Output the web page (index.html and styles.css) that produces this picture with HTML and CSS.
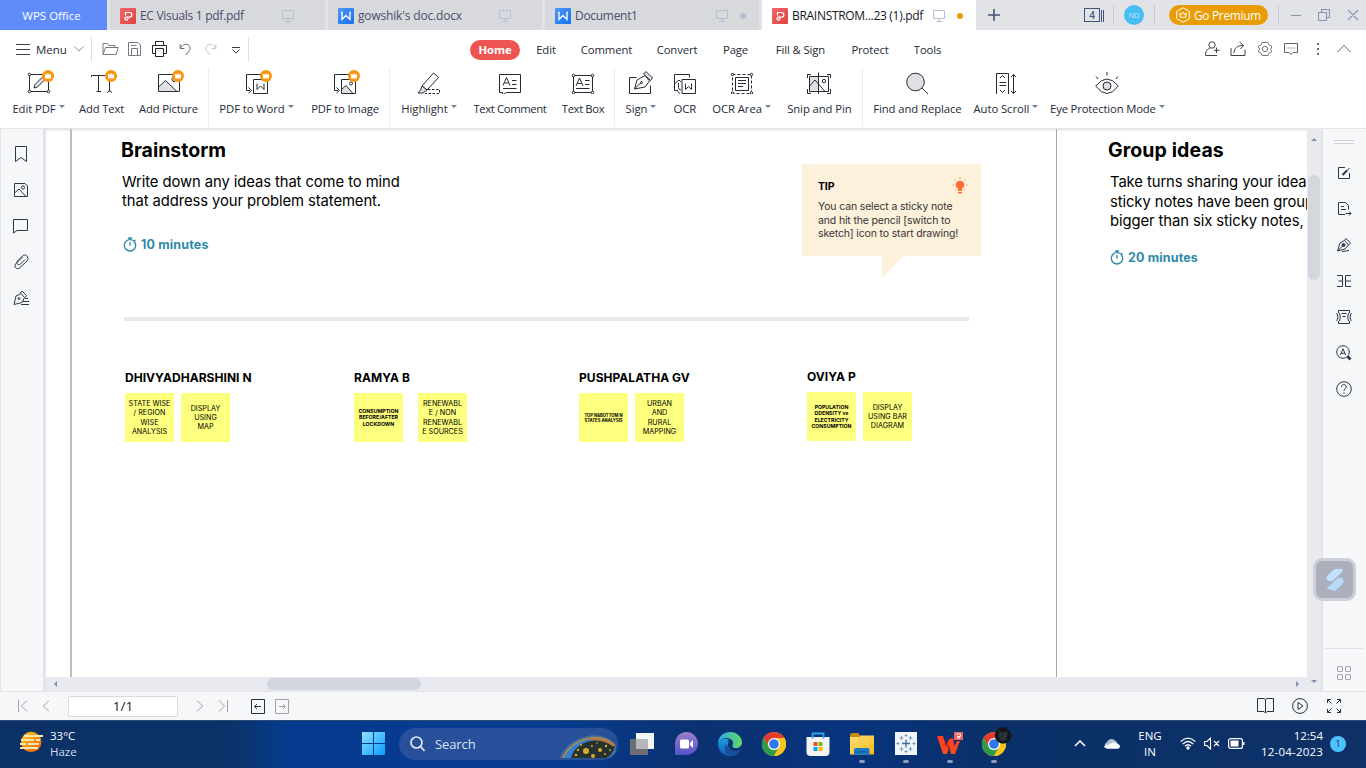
FILE: index.html
```html
<!DOCTYPE html>
<html lang="en">
<head>
<meta charset="utf-8">
<title>WPS Office</title>
<link rel="stylesheet" href="styles.css">
</head>
<body>
<svg class="defs" width="0" height="0">
  <defs>
    <linearGradient id="gRed" x1="0" y1="0" x2="1" y2="1"><stop offset="0" stop-color="#f0666a"/><stop offset="1" stop-color="#df4340"/></linearGradient>
    <linearGradient id="gBlue" x1="0" y1="0" x2="1" y2="1"><stop offset="0" stop-color="#5297f8"/><stop offset="1" stop-color="#1470ee"/></linearGradient>
    <linearGradient id="gWin" x1="0" y1="0" x2="1" y2="1"><stop offset="0" stop-color="#8be3ff"/><stop offset="1" stop-color="#0a9cff"/></linearGradient>
    <linearGradient id="gSun" x1="0" y1="0" x2="1" y2="1"><stop offset="0" stop-color="#ffd21c"/><stop offset="1" stop-color="#e25a0c"/></linearGradient>
    <linearGradient id="gFolder" x1="0" y1="0" x2="1" y2="1"><stop offset="0" stop-color="#ffe07a"/><stop offset="1" stop-color="#f5b916"/></linearGradient>
    <linearGradient id="gChat" x1="0" y1="0" x2="0" y2="1"><stop offset="0" stop-color="#9a7fc4"/><stop offset="1" stop-color="#5353c8"/></linearGradient>
    <linearGradient id="gEdge" x1="0" y1="0" x2="1" y2="0"><stop offset="0" stop-color="#2aa9e6"/><stop offset="1" stop-color="#62dc64"/></linearGradient>
    <linearGradient id="gEdge2" x1="0" y1="0" x2="0" y2="1"><stop offset="0" stop-color="#1b9be0"/><stop offset="1" stop-color="#1458b4"/></linearGradient>
    <linearGradient id="gWps" x1="0" y1="0" x2="0" y2="1"><stop offset="0" stop-color="#ff3a2a"/><stop offset="1" stop-color="#f4501c"/></linearGradient>
    <symbol id="pdf" viewBox="0 0 16 16"><rect width="16" height="16" rx="1" fill="url(#gRed)"/><path d="M5.500 7.500V4.500H9.500A2.300 2.300 0 0 1 9.500 9.200H6.500A1.500 1.500 0 1 0 7.900 10.900V9.500" fill="none" stroke="#fff" stroke-width="1.200"/></symbol>
    <symbol id="doc" viewBox="0 0 16 16"><rect width="16" height="16" rx="1" fill="url(#gBlue)"/><path d="M3 4.500H4V11.500L8 7.500L12 11.500V4.500H13" fill="none" stroke="#fff" stroke-width="1.300"/></symbol>
    <symbol id="monitor" viewBox="0 0 12 12"><path d="M.5.5H11.500V8.500H.5ZM6 8.500V11M3 11.500H9" fill="none" stroke="#b5bfd6"/></symbol>
    <symbol id="crown" viewBox="0 0 12 12"><circle cx="6" cy="6" r="6" fill="#f9960f"/><path d="M3 3.500L4.600 5L6 3L7.400 5L9 3.500V8.500H3Z" fill="#fff"/></symbol>
    <symbol id="watch" viewBox="0 0 14 15"><circle cx="7" cy="8.300" r="5.700" fill="none" stroke="#2e8aa8" stroke-width="1.300"/><path d="M5 1H9M7 1V2.500M7 5V8.700M11.500 3L12.500 4" stroke="#2e8aa8" stroke-width="1.300"/></symbol>
    <symbol id="chrome" viewBox="0 0 24 24"><circle cx="12" cy="12" r="12" fill="#fcc934"/><path d="M1.600 6A12 12 0 0 1 22.400 6H12L6.800 15Z" fill="#e33b2e"/><path d="M1.600 6A12 12 0 0 0 12 24L17.200 15A6 6 0 0 1 6.800 15Z" fill="#2a9c4a"/><path d="M22.400 6A12 12 0 0 1 12 24L17.200 15A6 6 0 0 0 12 6Z" fill="#fcc31e"/><circle cx="12" cy="12" r="6" fill="#fff"/><circle cx="12" cy="12" r="4.800" fill="#2f78ea"/></symbol>
  </defs>
</svg>

<div class="window">
  <header class="tabs">
    <div class="home-tab">WPS Office</div>
    <div class="tab"><svg width="16" height="16"><use href="#pdf"/></svg><span class="t1">EC Visuals 1 pdf.pdf</span><svg class="mon" width="12" height="12"><use href="#monitor"/></svg></div>
    <div class="tab"><svg width="16" height="16"><use href="#doc"/></svg><span class="t2">gowshik's doc.docx</span><svg class="mon" width="12" height="12"><use href="#monitor"/></svg></div>
    <div class="tab dotted"><svg width="16" height="16"><use href="#doc"/></svg><span class="t3">Document1</span><svg class="mon" width="12" height="12"><use href="#monitor"/></svg><i class="dot"></i></div>
    <div class="tab dotted active"><svg width="16" height="16"><use href="#pdf"/></svg><span class="t4">BRAINSTROM...23 (1).pdf</span><svg class="mon" width="12" height="12"><use href="#monitor"/></svg><i class="dot"></i></div>
    <svg class="plus" width="12" height="12" viewBox="0 0 12 12"><path d="M6 0V12M0 6H12" stroke="#41547a" stroke-width="1.600"/></svg>
    <div class="win">
      <div class="count"><b>4</b><i></i><i></i></div>
      <i class="vs"></i>
      <div class="avatar">ND</div>
      <i class="vs"></i>
      <div class="premium"><svg width="14" height="16" viewBox="0 0 14 16" fill="none" stroke="#fff"><path d="M7 .7L13.300 4.300V11.700L7 15.300L.7 11.700V4.300Z"/><path d="M3.700 6.200L5.500 7.400L7 5.200L8.500 7.400L10.300 6.200L9.600 10.300H4.400Z"/></svg><span>Go Premium</span></div>
      <i class="vs"></i>
      <svg class="ctl" width="70" height="12" viewBox="0 0 70 12" fill="none" stroke="#8695b3" stroke-width="1.100"><path d="M0 6.500H10M27.500 3.500H35.500V11.500H27.500ZM30.500 3.500V.5H38.500V8.500H35.500M57 1L67 11M67 1L57 11"/></svg>
    </div>
  </header>

  <nav class="menubar">
    <svg class="burger" width="14" height="11" viewBox="0 0 14 11"><path d="M0 .5H14M0 5.500H14M0 10.500H14" stroke="#3c3f4b"/></svg>
    <span class="menu-word">Menu</span>
    <svg class="chev" width="10" height="6" viewBox="0 0 10 6"><path d="M.5.5L5 5L9.500.5" fill="none" stroke="#898f9a"/></svg>
    <i class="ms"></i>
    <svg class="q-open" width="17" height="14" viewBox="0 0 17 14" fill="none" stroke="#747985"><path d="M1 12.500V1.500H5.500L7 3.500H13V5.500M1 12.500L3.500 5.500H16.300L14 12.500Z"/></svg>
    <svg class="q-save" width="13" height="14" viewBox="0 0 13 14" fill="none" stroke="#747985"><path d="M.5.5H10L12.500 3V13.500H.5ZM3.500 13.500V6.500H9.500V13.500M3 3.500H8.500"/></svg>
    <svg class="q-print" width="15" height="16" viewBox="0 0 15 16" fill="none" stroke="#22242c"><path d="M3.500 4.500V.5H11.500V4.500M3.500 12.500H.5V4.500H14.500V12.500H11.500M3.500 7.500H11.500V15.500H3.500Z"/></svg>
    <svg class="q-undo" width="12" height="12" viewBox="0 0 12 12" fill="none" stroke="#666b77"><path d="M1.200 1V5.500H5.500M1.200 5.500C3.500 1 8 .3 10 2.500C12.500 5.500 10.500 9.500 6.500 11.500"/></svg>
    <svg class="q-redo" width="12" height="12" viewBox="0 0 12 12" fill="none" stroke="#c5c7cc"><path d="M10.800 1V5.500H6.500M10.800 5.500C8.500 1 4 .3 2 2.500C-.5 5.500 1.500 9.500 5.500 11.500"/></svg>
    <svg class="q-more" width="8" height="7" viewBox="0 0 8 7" fill="none" stroke="#3c3f4b"><path d="M0 .5H8M.5 2.500L4 6L7.500 2.500"/></svg>
    <i class="ms ms2"></i>
    <div class="pages">
      <span class="pill">Home</span><span class="p20">Edit</span><span class="p49">Comment</span><span class="p40">Convert</span><span class="p25">Page</span><span class="p53">Fill &amp; Sign</span><span class="p36">Protect</span><span class="p27">Tools</span>
    </div>
    <div class="acts">
      <svg width="16" height="16" viewBox="0 0 16 16" fill="none" stroke="#3f434e"><circle cx="8" cy="4" r="3.200"/><path d="M6 7C2.500 8.500 1.500 11 1.500 14.500H13M12.500 6.500V12M10 9.300H15.500" /></svg>
      <svg width="16" height="16" viewBox="0 0 16 16" fill="none" stroke="#3f434e"><path d="M1 7V14.500H15V8.500M4 12C4 7 7.500 4.500 13 4.500M9.500 1L13.500 4.500L10.500 8"/></svg>
      <svg width="16" height="16" viewBox="0 0 16 16" fill="none" stroke="#747985"><path d="M5 1.500H11L12 4L14.500 5V7L13.500 8L14.500 10V11L12 12L11 14.500H5L4 12L1.500 11V10L2.500 8L1.500 6V5L4 4Z"/><circle cx="8" cy="8" r="2.700"/></svg>
      <svg width="16" height="16" viewBox="0 0 16 16" fill="none" stroke="#5b606c"><path d="M1.500 2.500H14.500V11.500H10L8 13.500L6 11.500H1.500Z"/><path d="M4.500 7H11.500" stroke-dasharray="1.300 1.500"/></svg>
      <svg width="16" height="16" viewBox="0 0 16 16" fill="#666b77"><path d="M7 2h2v2H7zM7 7h2v2H7zM7 12h2v2H7z"/></svg>
      <svg width="16" height="16" viewBox="0 0 16 16" fill="none" stroke="#5b606c"><path d="M1.500 11L8 4.500L14.500 11"/></svg>
    </div>
  </nav>

  <div class="ribbon">
    <div class="group g-a">
      <div class="tool w51"><div class="ic"><svg width="24" height="24" viewBox="0 0 24 24" fill="none" stroke="#262a35"><path d="M2.500 4.500H21.500V21.500H2.500Z"/><path d="M7 18L8 14.500L16 6.500L18.500 9L10.500 17Z" fill="#dfe0e3"/><g fill="#fff"><circle cx="2.500" cy="4.500" r="1.300"/><circle cx="2.500" cy="21.500" r="1.300"/><circle cx="21.500" cy="21.500" r="1.300"/></g></svg><svg class="badge" width="12" height="12"><use href="#crown"/></svg></div><div class="lb dd">Edit PDF</div></div>
      <div class="tool w44"><div class="ic"><svg width="24" height="24" viewBox="0 0 24 24" fill="none" stroke="#262a35"><path d="M1.500 7V5.500H15M8.500 5.500V21.500M6.500 21.500H11M19.500 8V21.500M17 22.500Q19.500 21.500 19.500 20Q19.500 21.500 22 22.500"/></svg><svg class="badge" width="12" height="12"><use href="#crown"/></svg></div><div class="lb n1">Add Text</div></div>
      <div class="tool w59"><div class="ic"><svg width="24" height="24" viewBox="0 0 24 24" fill="none" stroke="#262a35"><path d="M1.500 17L8.500 10.500L20 21.500H1.500Z" fill="#dfe0e3" stroke="none"/><path d="M1.500 4.500H22.500V21.500H1.500ZM1.500 17L8.500 10.500L20 21.500"/><circle cx="17" cy="9.500" r="2"/></svg><svg class="badge" width="12" height="12"><use href="#crown"/></svg></div><div class="lb n1">Add Picture</div></div>
    </div>
    <div class="group g-b">
      <div class="tool w75"><div class="ic"><svg width="24" height="24" viewBox="0 0 24 24" fill="none" stroke="#262a35"><path d="M16 4.500H1.500V20.500H5M3.500 17.500L6.500 20.500L3.500 23M8.500 9.500H22.500V23.500H8.500ZM12 13.500V19.500L15.500 16L19 19.500V13.500"/></svg><svg class="badge" width="12" height="12"><use href="#crown"/></svg></div><div class="lb dd">PDF to Word</div></div>
      <div class="tool w68"><div class="ic"><svg width="24" height="24" viewBox="0 0 24 24" fill="none" stroke="#262a35"><path d="M16 4.500H1.500V20.500H5M3.500 17.500L6.500 20.500L3.500 23"/><path d="M8.500 19.500L13 15.500L20 23.500H8.500Z" fill="#dfe0e3" stroke="none"/><path d="M8.500 9.500H22.500V23.500H8.500ZM8.500 19.500L13 15.500L20 23.500"/><circle cx="18" cy="13.500" r="1.500"/></svg><svg class="badge" width="12" height="12"><use href="#crown"/></svg></div><div class="lb n1">PDF to Image</div></div>
    </div>
    <div class="group">
      <div class="tool w58"><div class="ic"><svg width="24" height="24" viewBox="0 0 24 24" fill="none" stroke="#262a35"><path d="M5 16L16.500 3L21.500 7.500L10 20Z"/><path d="M5 16L3.500 20L1 23H6L10 20Z" fill="#dfe0e3"/><path d="M11 19.500H22.500V23.500H8" stroke-dasharray="2.500 1.500"/></svg></div><div class="lb dd">Highlight</div></div>
      <div class="tool w72"><div class="ic"><svg width="24" height="24" viewBox="0 0 24 24" fill="none" stroke="#262a35"><path d="M1.500 4.500H22.500V22.500H8.500L4.500 25V22.500H1.500ZM5 15.500L8.500 7.500L12 15.500M6.500 13H10.500M14 10.500H18.500M14 14.500H18.500M5 18.500H18.500"/></svg></div><div class="lb n3">Text Comment</div></div>
      <div class="tool w42"><div class="ic"><svg width="24" height="24" viewBox="0 0 24 24" fill="none" stroke="#262a35"><path d="M2.500 5.500H21.500V22.500H2.500ZM5 16L8.500 8L12 16M6.500 13.500H10.500M14 10.500H18.500M14 14.500H18.500M5 18.500H18.500"/><g fill="#fff"><circle cx="2.500" cy="5.500" r="1.300"/><circle cx="21.500" cy="5.500" r="1.300"/><circle cx="2.500" cy="22.500" r="1.300"/><circle cx="21.500" cy="22.500" r="1.300"/></g></svg></div><div class="lb n3">Text Box</div></div>
    </div>
    <div class="group g-d">
      <div class="tool w32"><div class="ic"><svg width="24" height="24" viewBox="0 0 24 24" fill="none" stroke="#262a35"><path d="M7.500 7.500H.5V23.500H21.500V15.500M5.500 19L8 10L16 5.500L20.500 11L16 17L5.500 19ZM5.500 19L12 12.500"/><path d="M14.500 4L17 1.500L23.500 8L21.500 10.500Z" fill="#dfe0e3"/><circle cx="12.500" cy="12.500" r="1"/></svg></div><div class="lb dd">Sign</div></div>
      <div class="tool w23"><div class="ic"><svg width="24" height="24" viewBox="0 0 24 24" fill="none" stroke="#262a35"><path d="M5 20.500H1.500V4.500H16.500V7.500M1.500 14L6 10L8 12M5.500 13V17.500Q5.500 20 8 20M4.500 21.500L7 23.500M9 9.500H22.500V23.500H9ZM12.500 13.500V19.500L15.500 16.500L18.500 19.500V13.500"/></svg></div><div class="lb">OCR</div></div>
      <div class="tool w58"><div class="ic"><svg width="24" height="24" viewBox="0 0 24 24" fill="none" stroke="#262a35"><path d="M2.500 4.500H21.500V23.500H2.500Z" stroke-dasharray="3 2"/><path d="M5.500 7.500H18.500V20.500H5.500ZM8 10.500H16M8 13.500H16M8 16.500H13"/><g fill="#fff"><circle cx="2.500" cy="4.500" r="1.200"/><circle cx="21.500" cy="4.500" r="1.200"/><circle cx="2.500" cy="23" r="1.200"/><circle cx="21.500" cy="23" r="1.200"/></g></svg></div><div class="lb dd">OCR Area</div></div>
      <div class="tool w65"><div class="ic"><svg width="24" height="24" viewBox="0 0 24 24" fill="none" stroke="#262a35"><path d="M2.500 6.500H11.500V20.500H2.500Z" fill="#dfe0e3" stroke="none"/><path d="M.5 8V4.500H4M20 4.500H23.500V8M.5 19V23.500H4M20 23.500H23.500V19M2.500 6.500H21.500V21.500H2.500ZM11.500 2.500V25M2.500 16L8 10L18 21.500"/><circle cx="17" cy="11" r="1.700"/></svg></div><div class="lb">Snip and Pin</div></div>
    </div>
    <div class="group last">
      <div class="tool w89"><div class="ic"><svg width="24" height="24" viewBox="0 0 24 24" fill="none" stroke="#262a35"><circle cx="10.500" cy="12" r="8.800" fill="#dfe0e3"/><path d="M17 18L23 24"/></svg></div><div class="lb">Find and Replace</div></div>
      <div class="tool w65"><div class="ic"><svg width="24" height="24" viewBox="0 0 24 24" fill="none" stroke="#262a35"><path d="M2.500 3.500H14.500V24.500H2.500ZM6 8L8.500 5.500L11 8M6 20L8.500 22.500L11 20M5.500 12.500H12M5.500 15.500H12M19.500 4.500V23.500M17 7L19.500 4.500L22 7M17 21L19.500 23.500L22 21"/></svg></div><div class="lb dd">Auto Scroll</div></div>
      <div class="tool w115"><div class="ic"><svg width="24" height="24" viewBox="0 0 24 24" fill="none" stroke="#262a35"><path d="M.7 16Q12 2 23.300 16Q12 31 .7 16Z"/><circle cx="12" cy="16" r="4" fill="#dfe0e3"/><path d="M12 2V5.500M1 6.500L3 9M23 6.500L21 9"/></svg></div><div class="lb dd n1">Eye Protection Mode</div></div>
    </div>
  </div>

  <main class="work">
    <aside class="left">
      <svg viewBox="0 0 16 16"><path d="M2.500.5H13.500V15.500L8 11.500L2.500 15.500Z"/></svg>
      <svg viewBox="0 0 16 16"><path d="M1.500 1.500H12L14.500 4V14.500H1.500ZM1.500 11L6 7L13 14.500"/><circle cx="10" cy="5.500" r="1.600"/></svg>
      <svg viewBox="0 0 16 16"><path d="M.5 1.500H14.500V12.500H4L.5 15Z"/></svg>
      <svg viewBox="0 0 16 16"><path d="M9.500 3L3 9.500C0 13 4 16.500 7 13.500L14 7C17 3.500 12.500-1 9.500 2L4.500 7C2.500 9.500 5.500 12 7.500 10L12 5.500"/></svg>
      <svg viewBox="0 0 16 16"><path d="M1 14.500L3 6L8 3.500L11.500 7.500L9 12.500L1 14.500ZM7.500 3L9 1L13.500 5.500L12 7.500M10 11.500H16M8 14.500H16M12 8.500H15"/><circle cx="6" cy="8.500" r="1"/></svg>
    </aside>

    <div class="viewer">
      <section class="doc">
        <div class="sheet one">
          <div class="top">
            <div class="intro">
              <h1 class="h-a">Brainstorm</h1>
              <p class="lead l-a">Write down any ideas that come to mind<br><span class="l-a2">that address your problem statement.</span></p>
              <div class="time"><svg width="14" height="15"><use href="#watch"/></svg><b>10 minutes</b></div>
            </div>
            <div class="tip">
              <div class="tip-head"><b>TIP</b>
                <svg width="16" height="18" viewBox="0 0 16 18"><circle cx="8" cy="8" r="4.300" fill="#ff6d35"/><path d="M6 11H10V14H6ZM6 15H10V16.500H6Z" fill="#ff6d35"/><path d="M8 .5V2M.5 8H2M14 8H15.500M2.700 2.700L3.700 3.700M13.300 2.700L12.300 3.700M2.700 13.300L3.700 12.300M13.300 13.300L12.300 12.300" stroke="#ff8a5c"/></svg>
              </div>
              <p><span class="tp1">You can select a sticky note</span><br><span class="tp2">and hit the pencil [switch to</span><br><span class="tp3">sketch] icon to start drawing!</span></p>
              <svg class="tail" width="23" height="23"><path d="M0 0H23L0 22.500Z" fill="#fdf1dc"/></svg>
            </div>
          </div>
          <div class="rule"></div>
          <div class="people">
            <div class="person c1"><h2>DHIVYADHARSHINI N</h2><div class="notes"><div class="note">STATE WISE<br>/ REGION<br>WISE<br>ANALYSIS</div><div class="note">DISPLAY<br>USING<br>MAP</div></div></div>
            <div class="person c2"><h2>RAMYA B</h2><div class="notes wide"><div class="note small">CONSUMPTION<br>BEFORE/AFTER<br>LOCKDOWN</div><div class="note">RENEWABL<br>E / NON<br>RENEWABL<br>E SOURCES</div></div></div>
            <div class="person c3"><h2>PUSHPALATHA GV</h2><div class="notes"><div class="note tiny">TOP N&amp;BOTTOM N<br>STATES ANALYSIS</div><div class="note">URBAN<br>AND<br>RURAL<br>MAPPING</div></div></div>
            <div class="person c4"><h2>OVIYA P</h2><div class="notes"><div class="note small">POPULATION<br>DDENSITY vs<br>ELECTRICITY<br>CONSUMPTION</div><div class="note">DISPLAY<br>USING BAR<br>DIAGRAM</div></div></div>
          </div>
        </div>
        <div class="sheet two">
          <h1 class="h-b">Group ideas</h1>
          <p class="lead l-b"><span class="lb1">Take turns sharing your ideas</span><br><span class="lb2">sticky notes have been group</span><br><span class="lb3">bigger than six sticky notes, t</span></p>
          <div class="time"><svg width="14" height="15"><use href="#watch"/></svg><b>20 minutes</b></div>
        </div>
      </section>
      <div class="vbar"><i class="up"></i><i class="thumb"></i><i class="down"></i></div>
      <div class="hbar"><i class="lft"></i><i class="thumb"></i><i class="rgt"></i></div>
    </div>

    <aside class="right">
      <i class="grip"></i>
      <svg viewBox="0 0 16 16"><path d="M9 2.500H2.500V13.500H13.500V8M7 9.500L13.500 3" /><path d="M6.500 10L11 5.500" stroke-width="2"/></svg>
      <svg viewBox="0 0 16 16"><path d="M9 13.500H2.500V1.500H9.500L12.500 4.500V8.500M5 5.500H8M5 8.500H10M9.500 12.500H15M13 10.500L15 12.500L13 14.500"/></svg>
      <svg viewBox="0 0 16 16"><path d="M1.500 14L4 6L8.500 3.500L12.500 8L9 12L1.500 14L7 8.500M8.500 3.500L10 1.500L14.500 6L12.500 8M6 14.500L13 13.500"/><circle cx="7.500" cy="8" r="1.500" fill="#33415e"/></svg>
      <svg viewBox="0 0 16 16"><path d="M1 2.500H6.500V13.500H1M2.500 8H6.500M15 2.500H9.500V13.500H15M9.500 8H15"/></svg>
      <svg viewBox="0 0 16 16"><path d="M2.500 4V1.500H13.500V4M2.500 12V14.500H13.500V12M.8 4Q3.200 8 .8 12M3.500 4Q5 8 3.500 12M12.500 4Q11 8 12.500 12M15.200 4Q12.800 8 15.200 12M5.500 4.500H10.500M6.500 7.500H9.500"/></svg>
      <svg viewBox="0 0 16 16"><circle cx="7" cy="7" r="6.300"/><path d="M4.300 10L7 3.800L9.700 10M5 8.300H9"/><path d="M11.500 11.500L14.500 14.500" stroke-width="2.600"/></svg>
      <svg viewBox="0 0 16 16"><circle cx="8" cy="8" r="7.300"/><path d="M5.500 6C5.500 2.500 10.500 3 10.300 6C10.200 7.500 8 7.800 8 10M8 11.300V12.700"/></svg>
      <div class="apps"><i></i><i></i><i></i><i></i></div>
    </aside>
  </main>
  <div class="float"><svg width="20" height="26" viewBox="0 0 20 26"><path d="M1.500 12Q1 10 2.500 8.500L9.500 2H18L17 5L7.500 14H3Z" fill="#c0e2fb"/><path d="M18.500 13Q19 15 17.500 17L10 24L2 22L3 20L13.500 10.500H17Z" fill="#b6daf8"/></svg></div>

  <footer class="status">
    <svg class="s1" width="32" height="12" viewBox="0 0 32 12"><path d="M1.500 0V12M10 .5L4.500 6L10 11.500M32 .5L26.500 6L32 11.500"/></svg>
    <div class="page">1/1</div>
    <svg class="s2" width="32" height="12" viewBox="0 0 32 12"><path d="M1 .5L6.500 6L1 11.500M23 .5L28.500 6L23 11.500M31.500 0V12"/></svg>
    <svg class="s3" width="14" height="15" viewBox="0 0 14 15"><path d="M.5.5H13.500V14.500H.5ZM3.500 7.500H10M6 5L3.500 7.500L6 10" /></svg>
    <svg class="s4" width="14" height="15" viewBox="0 0 14 15"><path d="M.5.5H13.500V14.500H.5ZM4 7.500H10.500M8 5L10.500 7.500L8 10" /></svg>
    <div class="views">
      <svg width="17" height="16" viewBox="0 0 17 16"><path d="M.5.5H7L8.500 1.500L10 .5H16.500V13.500H10L8.500 15L7 13.500H.5ZM8.500 1.500V15"/></svg>
      <svg width="16" height="16" viewBox="0 0 16 16"><circle cx="8" cy="8" r="7.400"/><path d="M6 4.500L11 8L6 11.500Z"/></svg>
      <svg width="16" height="16" viewBox="0 0 16 16"><path d="M1.500 5V1.500H5M1.500 1.500L5.500 5.500M11 1.500H14.500V5M14.500 1.500L10.500 5.500M1.500 11V14.500H5M1.500 14.500L5.500 10.500M14.500 11V14.500H11M14.500 14.500L10.500 10.500"/></svg>
    </div>
  </footer>

  <footer class="taskbar">
    <div class="weather">
      <svg width="25" height="22" viewBox="0 0 25 22"><circle cx="12.300" cy="11" r="10.200" fill="url(#gSun)"/><path d="M5 5H24M2 9H15M17 9H21M1 13H7M9 13H20M1 17H19" stroke="#f7e3b0" stroke-width="1.900"/></svg>
      <div class="wt"><span class="w-a">33°C</span><span class="w-b">Haze</span></div>
    </div>
    <svg class="start" width="23" height="23" viewBox="0 0 23 23"><path d="M0 0H11V11H0ZM12 0H23V11H12ZM0 12H11V23H0ZM12 12H23V23H12Z" fill="url(#gWin)"/></svg>
    <div class="search">
      <svg width="15" height="16" viewBox="0 0 15 16" fill="none" stroke="#e4eaf5" stroke-width="1.700"><circle cx="6.500" cy="6.500" r="5.500"/><path d="M10.500 10.500L14.500 15"/></svg>
      <span>Search</span>
      <svg class="globe" width="58" height="24" viewBox="0 0 58 24"><path d="M1 24C8 2 44-8 57 12Q58 22 50 24Z" fill="#496d9c"/><path d="M4 24C12 5 42-4 56 12" fill="none" stroke="#b79445" stroke-width="1.500"/><path d="M5 24C12 8 34-2 56 12Q56 20 48 24Z" fill="#3580d6"/><path d="M12 24C15 9 36 0 56 12Q54 21 47 24Z" fill="#27322f"/><path d="M30 5Q45 4 55 12" fill="none" stroke="#b9773c" stroke-width="2"/><g fill="#dba92c"><circle cx="27" cy="17" r="3"/><circle cx="34" cy="22" r="2"/><circle cx="41" cy="16" r="2"/><circle cx="19" cy="16" r="1.200"/><circle cx="17" cy="21" r="1.300"/><circle cx="22" cy="11" r="1"/><circle cx="33" cy="12" r="1"/><circle cx="47" cy="12" r="1.200"/><circle cx="46" cy="20" r="1"/><circle cx="38" cy="9" r=".8"/><circle cx="51" cy="16" r=".9"/></g></svg>
    </div>
    <div class="dock">
      <div><svg width="24" height="24" viewBox="0 0 24 24"><rect x="6" y="1" width="18" height="16" fill="#f4f5f7"/><rect x="0" y="7" width="18" height="16" fill="#6c6e72"/><rect x="6" y="7" width="12" height="10" fill="#b4b7bb"/></svg></div>
      <div><svg width="24" height="24" viewBox="0 0 24 24"><path d="M1 23V12A11.500 11.500 0 1 1 12 23Z" fill="url(#gChat)"/><rect x="6" y="7.500" width="9" height="9" rx="1.500" fill="#fff"/><path d="M16 11L19 8V16L16 13Z" fill="#fff"/></svg></div>
      <div><svg width="24" height="24" viewBox="0 0 24 24"><path d="M0 12C0 4 6 0 12 0C20 0 24 6 24 10.500C24 14 21 16 18 16C14 16 14 14 15 12C16 8 11 6 8 6C4 6 1 9 0 12Z" fill="url(#gEdge)"/><path d="M0 12C1 8 5 6 9 7C12 8 10 10 10 13C10 18 17 21 22 18C19 23 15 24 12 24C5 24 0 19 0 12Z" fill="url(#gEdge2)"/><path d="M9 12C4 17 9 24 14 24C18 24 21 21 22 18C17 21 9 18 9 12Z" fill="#174f9c"/></svg></div>
      <div><svg width="24" height="24"><use href="#chrome"/></svg></div>
      <div><svg width="24" height="24" viewBox="0 0 24 24"><path d="M.5 5H23.500V20Q23.500 24 19.500 24H4.500Q.5 24 .5 20Z" fill="#f3f4f6"/><path d="M6.500 6.500V1.500H17.500V6.500" fill="none" stroke="#24a5ee" stroke-width="1.800"/><path d="M7.500 10H11.500V14H7.500Z" fill="#f25022"/><path d="M12.500 10H16.500V14H12.500Z" fill="#7fba00"/><path d="M7.500 15H11.500V19H7.500Z" fill="#00a4ef"/><path d="M12.500 15H16.500V19H12.500Z" fill="#ffb900"/></svg></div>
      <div class="run"><svg width="24" height="24" viewBox="0 0 24 24"><path d="M0 3Q0 1 2 1H8L11 4V8H0Z" fill="#c88a06"/><path d="M0 5H9L11 3.500H24V22.500H0Z" fill="url(#gFolder)"/><path d="M4 22.500V18Q4 16 6 16H17.500Q19.500 16 19.500 18V22.500Z" fill="#1778c8"/><path d="M8 20.500Q8 19 10 19H14Q16 19 16 20.500" fill="#105ba8"/></svg></div>
      <div class="run"><svg width="22" height="23" viewBox="0 0 22 23"><rect width="22" height="23" fill="#f1f4f8"/><path d="M11 7.500V15.500M7 11.500H15" stroke="#376d96" stroke-width="1.300"/><path d="M6.500 4V8M4.500 6H8.500M15.500 4V8M13.500 6H17.500M6.500 15V19M4.500 17H8.500M15.500 15V19M13.500 17H17.500M11 2V5M9.500 3.500H12.500M11 18V21M9.500 19.500H12.500M3 10V13M1.500 11.500H4.500M19 10V13M17.500 11.500H20.500" stroke="#5f8bb0" stroke-width=".8"/></svg></div>
      <div class="run"><svg width="26" height="24" viewBox="0 0 26 24"><path d="M0 4H6L9 14L12 7L16 6L17.500 14L20 9H23L18 22H14L12.500 15L10 22H6Z" fill="url(#gWps)"/><path d="M6 4L12.500 15L14 22L9 14Z" fill="#b8140e" opacity=".6"/><rect x="17" y="0" width="9" height="8" fill="#f16365"/><path d="M20 3V2H23.500V4.500H20.500V6H23" fill="none" stroke="#fff" stroke-width=".9"/></svg></div>
      <div class="run"><svg width="30" height="29" viewBox="0 0 30 29"><use href="#chrome" x="0" y="5" width="24" height="24"/><circle cx="21" cy="8.500" r="8.200" fill="#101519"/><path d="M17 3L19 5H23L25 3L25.500 9L23.500 14H18.500L16.500 9Z" fill="#283138"/></svg></div>
    </div>
    <div class="tray">
      <svg width="12" height="7" viewBox="0 0 12 7" fill="none" stroke="#fff" stroke-width="1.500"><path d="M1 6L6 1L11 6"/></svg>
      <svg class="cloud" width="16" height="11" viewBox="0 0 16 11"><path d="M3.500 10.500A3.300 3.300 0 0 1 2.800 4.200A5 5 0 0 1 11 2.500A4.500 4.500 0 0 1 13 9Z" fill="#aebfd8"/><path d="M2 10Q0 10.500 .3 8L5 6.500L9 4L14 6Q17 7.500 15.500 9.500Q15 10.700 13.500 10.700H3Z" fill="#fff"/></svg>
      <div class="lang"><span class="g1">ENG</span><span class="g2">IN</span></div>
      <svg class="wifi" width="16" height="13" viewBox="0 0 16 13" fill="none" stroke="#fff" stroke-width="1.300"><path d="M.6 4.600Q8-2.400 15.400 4.600M2.800 7Q8 2 13.200 7M5 9.300Q8 6.300 11 9.300"/><circle cx="8" cy="11" r="1" fill="#fff"/></svg>
      <svg class="mute" width="16" height="13" viewBox="0 0 16 13" fill="none" stroke="#fff" stroke-width="1.100"><path d="M.6 4.500H3L6.500 1V12L3 8.500H.6ZM10 4L15 9M15 4L10 9"/></svg>
      <svg class="batt" width="17" height="11" viewBox="0 0 17 11"><rect x=".6" y=".6" width="13.800" height="9.800" rx="2" fill="none" stroke="#fff" stroke-width="1.200"/><rect x="2.500" y="2.500" width="8" height="6" fill="#fff"/><path d="M15 4H16.500V7H15Z" fill="#fff"/></svg>
      <div class="clock"><span class="k1">12:54</span><span class="k2">12-04-2023</span></div>
      <div class="notif">1</div>
    </div>
  </footer>
</div>
</body>
</html>
```
FILE: styles.css
```css
* { box-sizing: border-box; }
body { margin: 0; font-family: "Open Sans", "Noto Sans", sans-serif; font-size: 11.500px; color: #262a38; overflow: hidden; }
svg { display: block; flex: none; }
i { display: block; flex: none; }
h1, h2, p { margin: 0; }
.defs { position: absolute; }
.window { width: 1366px; height: 768px; display: flex; flex-direction: column; background: #fff; position: relative; }
span { white-space: nowrap; }

/* document tabs */
.tabs { height: 30px; flex: none; display: flex; align-items: center; background: #e2e3e7; }
.home-tab { width: 107px; height: 30px; line-height: 32px; text-align: center; padding-right: 4px; background: #608cfa; color: #fff; font-size: 11.500px; }
.tab { width: 215px; height: 30px; margin-left: 3px; padding: 1px 31px 0 10px; display: flex; align-items: center; background: #d8d9dd; color: #4a4f68; font-size: 12px; }
.tab + .tab { margin-left: 3px; width: 214px; }
.tab span { margin-left: 4px; letter-spacing: -.3px; }
.tab .t2 { letter-spacing: -.17px; }
.tab .mon { margin-left: auto; }
.tab.dotted { padding-right: 13px; }
.dot { width: 6px; height: 6px; border-radius: 3px; background: #b5bfd6; margin-left: 12px; }
.tab.active { background: #fff; color: #15171f; }
.tab.active .dot { background: #e69a0b; }
.plus { margin-left: 12px; }
.win { display: flex; align-items: center; margin-left: auto; }
.count { display: flex; gap: 1px; margin-right: 9px; }
.count b { width: 16px; height: 14px; border: 1px solid #41547a; font-size: 10px; line-height: 12px; text-align: center; color: #41547a; font-weight: 600; }
.count i { width: 1px; height: 12px; margin-top: 2px; background: #41547a; }
.vs { width: 1px; height: 20px; background: #c9cbd1; }
.avatar { width: 20px; height: 20px; margin: 0 10px; border-radius: 10px; background: #46bdf3; color: #c8ecfc; font: 7.500px/20px "Open Sans", sans-serif; text-align: center; }
.premium { width: 99px; height: 20px; margin: 0 10px 0 14px; border-radius: 10px; background: #ea9c06; color: #fff; display: flex; align-items: center; padding-left: 7px; }
.premium span { margin-left: 4px; font-size: 11.800px; letter-spacing: -.25px; }
.ctl { margin: 0 5px 0 12px; }

/* menu row */
.menubar { height: 38px; flex: none; display: flex; align-items: center; position: relative; padding: 0 14px 0 16px; }
.menu-word { width: 30px; margin-left: 6px; font-size: 11.500px; }
.chev { margin-left: 8px; }
.ms { width: 1px; height: 24px; background: #dcdde0; margin-left: 7px; }
.ms2 { margin-left: 8px; }
.q-open { margin-left: 10px; }
.q-save { margin-left: 9px; }
.q-print { margin-left: 11px; }
.q-undo { margin-left: 12px; }
.q-redo { margin-left: 14px; }
.q-more { margin-left: 15px; margin-top: 2px; }
.pages { margin-left: 221px; display: flex; gap: 26px; align-items: center; font-size: 11.300px; letter-spacing: -.12px; padding-top: 1px; }
.pages span { display: flex; justify-content: center; }
.pages .pill { width: 50px; height: 20px; line-height: 20px; border-radius: 10px; background: #ed5452; color: #fff; font-weight: 700; margin-right: -10px; }
.p20 { width: 20px; } .p49 { width: 49px; } .p40 { width: 40px; } .p25 { width: 25px; } .p53 { width: 53px; } .p36 { width: 36px; margin-left: -1px; } .p27 { width: 27px; }
.acts { margin-left: auto; display: flex; gap: 10.500px; }

/* ribbon */
.ribbon { height: 61px; flex: none; display: flex; padding-left: 13px; border-bottom: 1px solid #e4e5e7; }
.group { display: flex; gap: 16px; height: 59px; padding-right: 10px; margin-right: 10px; border-right: 1px solid #ededf0; }
.g-a { gap: 15.500px; } .g-b { gap: 17px; } .g-d { gap: 16.300px; }
.group.last { border: 0; gap: 11.500px; }
.tool { display: flex; flex-direction: column; align-items: center; }
.ic { position: relative; height: 33px; padding-top: 2px; }
.tool .badge { position: absolute; right: -3px; top: 2px; }
.lb { font-size: 11.300px; line-height: 16px; letter-spacing: -.08px; white-space: nowrap; display: flex; }
.lb.n1 { letter-spacing: -.18px; }
.lb.n3 { letter-spacing: -.38px; }
.dd::after { content: ""; border: 3px solid transparent; border-top: 3px solid #727f99; margin: 4px 0 0 3px; height: 0; }
.w51 { width: 51px; } .w44 { width: 44px; } .w59 { width: 59px; } .w75 { width: 75px; } .w68 { width: 68px; } .w58 { width: 58px; } .w72 { width: 72px; } .w42 { width: 42px; } .w32 { width: 32px; } .w23 { width: 23px; } .w65 { width: 65px; } .w89 { width: 89px; } .w115 { width: 115px; }

/* work area */
.work { height: 562px; flex: none; display: flex; }
.left { width: 46px; border-right: 3px solid #e2e4ea; border-left: 1px solid #e2e4ea; background: #f5f7f9; display: flex; flex-direction: column; align-items: center; gap: 20px; padding: 17px 2px 0 0; }
.left svg, .right svg { width: 16px; height: 16px; fill: none; stroke: #30364a; }
.viewer { width: 1275px; display: grid; grid-template: 548px 14px / 1261px 14px; }
.doc { display: flex; overflow: hidden; background: #fff; box-shadow: inset 0 3px 3px -2px #ddd; font-family: Inter, "Open Sans", sans-serif; color: #000; }
.sheet.one { width: 987px; flex: none; margin-left: 24px; border-left: 2px solid #bfbfbf; border-right: 1px solid #a9a9a9; padding: 9px 0 0 49px; }
.top { display: flex; height: 179px; }
.intro { width: 681px; }
h1 { font-size: 19.500px; line-height: 25px; font-weight: 700; letter-spacing: 0; }
.lead { font-size: 14.800px; line-height: 19px; letter-spacing: -.08px; padding: 10px 0 0 1px; }
.time { display: flex; align-items: center; color: #2e8aa8; font-size: 12.500px; letter-spacing: .15px; gap: 4px; margin: 26px 0 0 2px; }
.tip { width: 179px; height: 92px; margin-top: 26px; padding: 14px 13px 0 16px; background: #fdf1dc; position: relative; font-size: 10.500px; letter-spacing: -.15px; color: #333; }
.tip-head { display: flex; justify-content: space-between; height: 22px; color: #000; }
.tip-head b { line-height: 18px; }
.tip-head svg { margin-top: -1px; }
.tip p { line-height: 13.500px; }
.tail { position: absolute; left: 80px; top: 91px; }
.rule { width: 845px; height: 4px; margin-left: 3px; background: #e9e9e9; }
.people { display: flex; padding: 48px 0 0 4px; }
.person h2 { font-size: 12px; line-height: 18px; font-weight: 700; white-space: nowrap; letter-spacing: .04px; }
.c1 { width: 229px; } .c2 { width: 225px; } .c3 { width: 228px; } .c4 { margin-top: -1px; }
.notes { display: flex; gap: 7px; padding-top: 6px; }
.notes.wide { gap: 15px; }
.note { width: 49px; height: 49px; background: #fdff7e; font-size: 7.200px; line-height: 9.300px; display: flex; align-items: center; justify-content: center; text-align: center; white-space: nowrap; }
.note.small { font-size: 5.200px; line-height: 6.500px; font-weight: 700; }
.note.tiny { font-size: 4.200px; line-height: 5px; font-weight: 700; }
.sheet.two { padding: 9px 0 0 51px; flex: none; width: 500px; }
.h-b { letter-spacing: .1px; }
.two .lead { padding-left: 2px; line-height: 19.500px; }
.two .time { margin-top: 18px; }

.vbar { background: #e8eaef; display: flex; flex-direction: column; align-items: center; padding-top: 9px; grid-row: span 2; }
.up { border: 3px solid transparent; border-top: 0; border-bottom: 3px solid #7f8fad; }
.vbar .thumb { width: 12px; height: 105px; border-radius: 6px; background: #d4d7de; margin-top: 34px; }
.down { border: 3px solid transparent; border-bottom: 0; border-top: 3px solid #7f8fad; margin-top: auto; margin-bottom: 8px; }
.hbar { background: #e8eaef; display: flex; align-items: center; padding: 0 8px 0 8px; }
.lft { border: 3px solid transparent; border-left: 0; border-right: 3px solid #7f8fad; }
.rgt { border: 3px solid transparent; border-right: 0; border-left: 3px solid #7f8fad; margin-left: auto; }
.hbar .thumb { width: 154px; height: 12px; border-radius: 6px; background: #d2d6de; margin-left: 210px; }
.right { width: 45px; border-left: 2px solid #e2e4ea; background: #f5f7f9; display: flex; flex-direction: column; align-items: center; gap: 20px; padding-right: 2px; }
.right .grip { width: 20px; height: 4px; border: 1px solid #cfd2d8; border-width: 1px 0; margin: 11px 0 1px; }
.apps { margin-top: auto; width: 38px; height: 43px; border-top: 1px solid #dfe1e6; padding: 17px 12px 0; display: grid; grid-template-columns: 6px 6px; grid-auto-rows: 6px; gap: 2px; }
.apps i { border: 1px solid #a5a8b0; border-radius: 1px; }
.float { position: absolute; left: 1313px; top: 558px; width: 43px; height: 43px; border: 3px solid #cdd0d8; border-radius: 9px; background: #abafbb; display: flex; align-items: center; justify-content: center; }

/* page status */
.status { height: 29px; flex: none; border-top: 1px solid #e2e4e8; background: #f5f7f9; display: flex; align-items: center; padding-left: 17px; }
.status svg { fill: none; stroke: #9fa2a8; }
.page { width: 110px; height: 21px; margin: 0 18px 0 19px; border: 1px solid #d7dadf; border-radius: 2px; background: #fff; text-align: center; font-size: 13.500px; line-height: 19px; color: #222; }
.s3 { margin-left: 23px; } .s4 { margin-left: 10px; }
.status .s3, .status .views svg { stroke: #2b3040; }
.views { margin-left: auto; display: flex; align-items: center; gap: 18px; padding-right: 24px; }

/* system taskbar */
.taskbar { height: 48px; flex: none; display: flex; align-items: center; padding-bottom: 2px; border-top: 1px solid #2d4a75; color: #fff; background: linear-gradient(90deg, #0b3166 0, #0b3269 230px, #053b8f 290px, #073b90 560px, #0b3170 700px, #07347f 850px, #0b3069 990px, #0d3167 1366px); }
.weather { width: 362px; padding-left: 19px; display: flex; align-items: center; }
.weather svg { margin-top: -4px; }
.wt { display: flex; flex-direction: column; margin-left: 6px; font-size: 11.500px; line-height: 16px; }
.w-b { color: #d4dceb; }
.search { width: 219px; height: 32px; margin-left: 14px; margin-right: 2px; border-radius: 16px; background: #28509a; display: flex; align-items: center; padding-left: 11px; overflow: hidden; color: #dbe3f2; font-size: 13px; }
.search span { margin-left: 10px; letter-spacing: -.1px; }
.globe { margin: 5px 1px 0 auto; }
.dock { display: flex; }
.dock div { width: 44px; height: 45px; display: flex; align-items: center; justify-content: center; position: relative; }
.dock .run::after { content: ""; position: absolute; left: 19px; top: 39px; width: 6px; height: 3px; border-radius: 2px; background: #8d9dbd; }
.dock .run:last-child svg { margin: -4px 0 0 6px; }
.tray { margin-left: auto; display: flex; align-items: center; padding-right: 20px; font-size: 11.500px; line-height: 16px; }
.cloud { margin-left: 18px; }
.lang { width: 30px; margin-left: 15px; display: flex; flex-direction: column; align-items: center; }
.wifi { margin-left: 15px; } .mute { margin-left: 8px; } .batt { margin-left: 8px; }
.clock { width: 70px; margin-left: 8px; display: flex; flex-direction: column; align-items: flex-end; }
.k2 { letter-spacing: .2px; }
.notif { width: 16px; height: 16px; border-radius: 8px; margin-left: 7px; background: #4cc2ff; color: #12294d; font-size: 9px; text-align: center; }
```
